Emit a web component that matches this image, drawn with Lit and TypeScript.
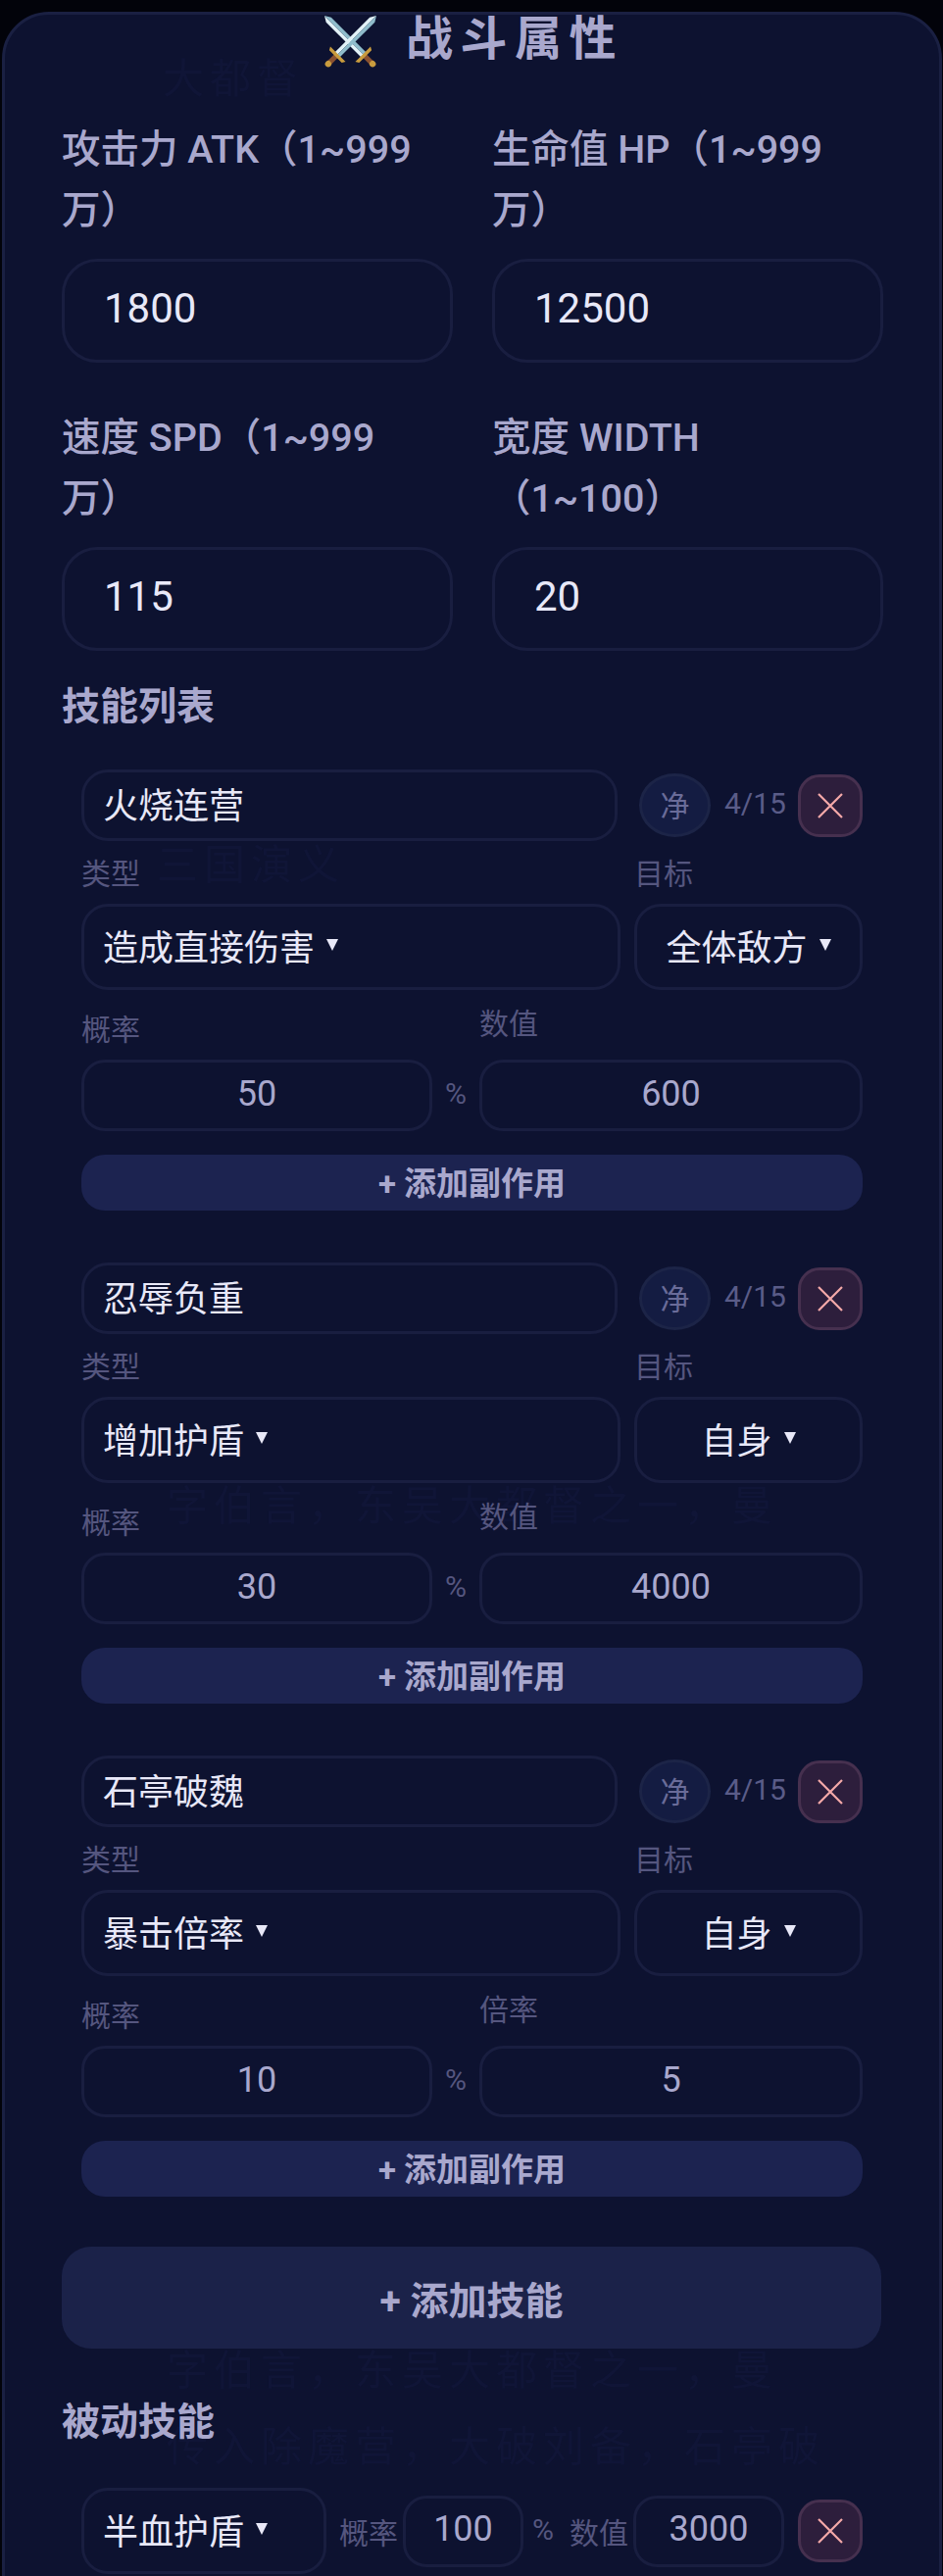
import { LitElement, html, css, svg } from "lit";
import { customElement } from "lit/decorators.js";

interface Skill { name: string; type: string; target: string; prob: string; valueLabel: string; value: string; }

const SKILLS: Skill[] = [
  { name: "火烧连营", type: "造成直接伤害", target: "全体敌方", prob: "50", valueLabel: "数值", value: "600" },
  { name: "忍辱负重", type: "增加护盾", target: "自身", prob: "30", valueLabel: "数值", value: "4000" },
  { name: "石亭破魏", type: "暴击倍率", target: "自身", prob: "10", valueLabel: "倍率", value: "5" },
];

const GHOSTS = [
  { t: "大都督", x: 166, y: 60 },
  { t: "三国演义", x: 160, y: 862 },
  { t: "字伯言，东吴大都督之一，曼", x: 170, y: 1516 },
  { t: "字伯言，东吴大都督之一，曼", x: 170, y: 2398 },
  { t: "传入除魔营，大破刘备，石亭破", x: 170, y: 2476 },
];

function sword() {
  return svg`
    <path d="M0 0 L-3.6 6 V57 H0 Z" fill="#e2f2f7"/>
    <path d="M0 0 L3.6 6 V57 H0 Z" fill="#8fbccb"/>
    <rect x="-2.6" y="58" width="5.2" height="10" fill="#8a5230"/>
    <path d="M-11 55.5 H11 L9 59 H-9 Z" fill="#c99c3e"/>
    <circle cx="0" cy="69.5" r="3.2" fill="#c99c3e"/>`;
}

const swords = svg`
  <g transform="translate(1,1) rotate(-45)">${sword()}</g>
  <g transform="translate(54,1) rotate(45)">${sword()}</g>`;

@customElement("app-root")
export class AppRoot extends LitElement {
  static styles = css`
    :host {
      display: block;
      height: 2628px;
      overflow: hidden;
      background: #02030a;
      font-family: Roboto, "Noto Sans CJK SC", sans-serif;
    }
    .card {
      position: relative;
      box-sizing: border-box;
      margin: 12px 1px 0 2px;
      height: 2700px;
      padding: 0 59px 0 58px;
      background: #0d1230;
      border: 3px solid #1a2042;
      border-radius: 48px;
    }
    .ghost {
      position: absolute;
      font-size: 42px;
      line-height: 42px;
      letter-spacing: 6px;
      white-space: nowrap;
      color: #101537;
      filter: blur(0.6px);
    }
    .content { position: relative; }
    .title {
      display: flex;
      justify-content: center;
      align-items: center;
      height: 54px;
      gap: 29px;
      padding-left: 4px;
      margin-bottom: 53px;
      font-size: 48px;
      line-height: 50px;
      font-weight: 700;
      letter-spacing: 7.5px;
      color: #a9a8cd;
    }
    .title span { position: relative; top: -2px; }
    .title svg { width: 55px; height: 55px; overflow: visible; }
    .stats {
      display: grid;
      grid-template-columns: 399px 399px;
      column-gap: 40px;
      row-gap: 46px;
    }
    .stat-label {
      font-size: 39.5px;
      line-height: 62px;
      font-weight: 500;
      color: #a9a8cd;
      margin-bottom: 18px;
      padding-right: 30px;
    }
    .stat-input {
      box-sizing: border-box;
      height: 106px;
      padding: 0 40px 5px;
      display: flex;
      align-items: center;
      font-size: 42px;
      color: #e8e8f8;
      border: 3px solid #191e40;
      border-radius: 36px;
    }
    .heading {
      font-size: 39px;
      line-height: 56px;
      font-weight: 700;
      color: #a9a8cd;
    }
    .heading.skills { margin-top: 29px; margin-bottom: 36px; }
    .heading.passive { margin-top: 47px; margin-bottom: 39px; }
    .skill-list {
      display: flex;
      flex-direction: column;
      gap: 53px;
      padding: 0 19px 0 20px;
    }
    .name-row { display: flex; align-items: center; height: 73px; margin-bottom: 16px; }
    .field {
      box-sizing: border-box;
      display: flex;
      align-items: center;
      font-size: 36px;
      color: #e8e8f8;
      border: 3px solid #191e40;
      border-radius: 27px;
    }
    .name-input { flex: 1; height: 73px; padding: 0 19px 5px; margin-right: 22px; }
    .clean {
      box-sizing: border-box;
      width: 73px;
      height: 65px;
      display: flex;
      align-items: center;
      justify-content: center;
      padding-bottom: 3px;
      font-size: 30px;
      color: #6a6c99;
      background: #141c42;
      border: 3px solid #1c2447;
      border-radius: 50%;
      margin-right: 14px;
    }
    .count { width: 60px; font-size: 30px; color: #5a5c88; margin-right: 15px; white-space: nowrap; padding-bottom: 5px; }
    .del {
      box-sizing: border-box;
      flex: none;
      width: 66px;
      height: 64px;
      display: flex;
      align-items: center;
      justify-content: center;
      background: #2d1e3c;
      border: 3px solid #46304f;
      border-radius: 22px;
    }
    .del svg { width: 26px; height: 26px; }
    .type-row {
      display: grid;
      grid-template-columns: 1fr 233px;
      column-gap: 14px;
      margin-bottom: 17px;
    }
    .small-label {
      font-size: 30px;
      line-height: 36px;
      color: #55567f;
      margin-bottom: 12px;
    }
    .select { height: 88px; padding: 0 19px 5px; white-space: nowrap; }
    .select.center { justify-content: center; padding: 0 0 5px; }
    .caret {
      flex: none;
      width: 0;
      height: 0;
      margin-left: 12px;
      border-left: 6px solid transparent;
      border-right: 6px solid transparent;
      border-top: 12px solid #e8e8f8;
    }
    .num-row {
      display: grid;
      grid-template-columns: 1fr 48px 391px;
      align-items: end;
      margin-bottom: 24px;
    }
    .col { display: flex; flex-direction: column; }
    .num {
      height: 73px;
      justify-content: center;
      padding-bottom: 4px;
      color: #a9a8cd;
      border-radius: 24px;
    }
    .prob-label { margin-bottom: 12px; }
    .value-label { margin-bottom: 18px; }
    .unit { height: 73px; display: flex; align-items: center; justify-content: center; padding-bottom: 5px; box-sizing: border-box; font-size: 30px; color: #55567f; }
    .add-effect {
      box-sizing: border-box;
      height: 57px;
      padding-bottom: 3px;
      display: flex;
      align-items: center;
      justify-content: center;
      font-size: 33px;
      font-weight: 700;
      color: #a9a8cd;
      background: #1c2350;
      border-radius: 24px;
    }
    .add-skill {
      height: 104px;
      margin-top: 51px;
      display: flex;
      align-items: center;
      justify-content: center;
      font-size: 39px;
      font-weight: 700;
      color: #a9a8cd;
      background: #1b2249;
      border-radius: 30px;
    }
    .passive-row {
      display: flex;
      align-items: center;
      padding: 0 19px 0 20px;
    }
    .passive-row .select { width: 250px; flex: none; margin-right: 13px; }
    .inline-label { font-size: 30px; color: #55567f; white-space: nowrap; margin-right: 5px; }
    .passive-row .num { flex: none; }
    .p-prob { width: 123px; margin-right: 9px; }
    .p-unit { font-size: 30px; color: #55567f; margin-right: 16px; padding-bottom: 4px; }
    .p-val { width: 154px; margin-left: 0; margin-right: 14px; }
  `;

  private del() {
    return html`<div class="del">
      <svg viewBox="0 0 26 26" fill="none" stroke="#f4a9a9" stroke-width="2.2">
        <path d="M1 1 L25 25 M25 1 L1 25"></path>
      </svg>
    </div>`;
  }

  private skill(s: Skill) {
    return html`<div class="skill">
      <div class="name-row">
        <div class="field name-input">${s.name}</div>
        <div class="clean">净</div>
        <div class="count">4/15</div>
        ${this.del()}
      </div>
      <div class="type-row">
        <div class="col">
          <div class="small-label">类型</div>
          <div class="field select">${s.type}<span class="caret"></span></div>
        </div>
        <div class="col">
          <div class="small-label">目标</div>
          <div class="field select center">${s.target}<span class="caret"></span></div>
        </div>
      </div>
      <div class="num-row">
        <div class="col">
          <div class="small-label prob-label">概率</div>
          <div class="field num">${s.prob}</div>
        </div>
        <div class="unit">%</div>
        <div class="col">
          <div class="small-label value-label">${s.valueLabel}</div>
          <div class="field num">${s.value}</div>
        </div>
      </div>
      <div class="add-effect">+ 添加副作用</div>
    </div>`;
  }

  private stat(label: string, value: string) {
    return html`<div>
      <div class="stat-label">${label}</div>
      <div class="stat-input">${value}</div>
    </div>`;
  }

  render() {
    return html`<div class="card">
      ${GHOSTS.map(
        (g) => html`<div class="ghost" style="left:${g.x - 5}px;top:${g.y - 15}px">${g.t}</div>`
      )}
      <div class="content">
        <div class="title">
          <svg viewBox="0 0 55 55">${swords}</svg>
          <span>战斗属性</span>
        </div>
        <div class="stats">
          ${this.stat("攻击力 ATK（1~999万）", "1800")}
          ${this.stat("生命值 HP（1~999万）", "12500")}
          ${this.stat("速度 SPD（1~999万）", "115")}
          ${this.stat("宽度 WIDTH（1~100）", "20")}
        </div>
        <div class="heading skills">技能列表</div>
        <div class="skill-list">${SKILLS.map((s) => this.skill(s))}</div>
        <div class="add-skill">+ 添加技能</div>
        <div class="heading passive">被动技能</div>
        <div class="passive-row">
          <div class="field select">半血护盾<span class="caret"></span></div>
          <span class="inline-label">概率</span>
          <div class="field num p-prob">100</div>
          <span class="p-unit">%</span>
          <span class="inline-label">数值</span>
          <div class="field num p-val">3000</div>
          ${this.del()}
        </div>
      </div>
    </div>`;
  }
}
